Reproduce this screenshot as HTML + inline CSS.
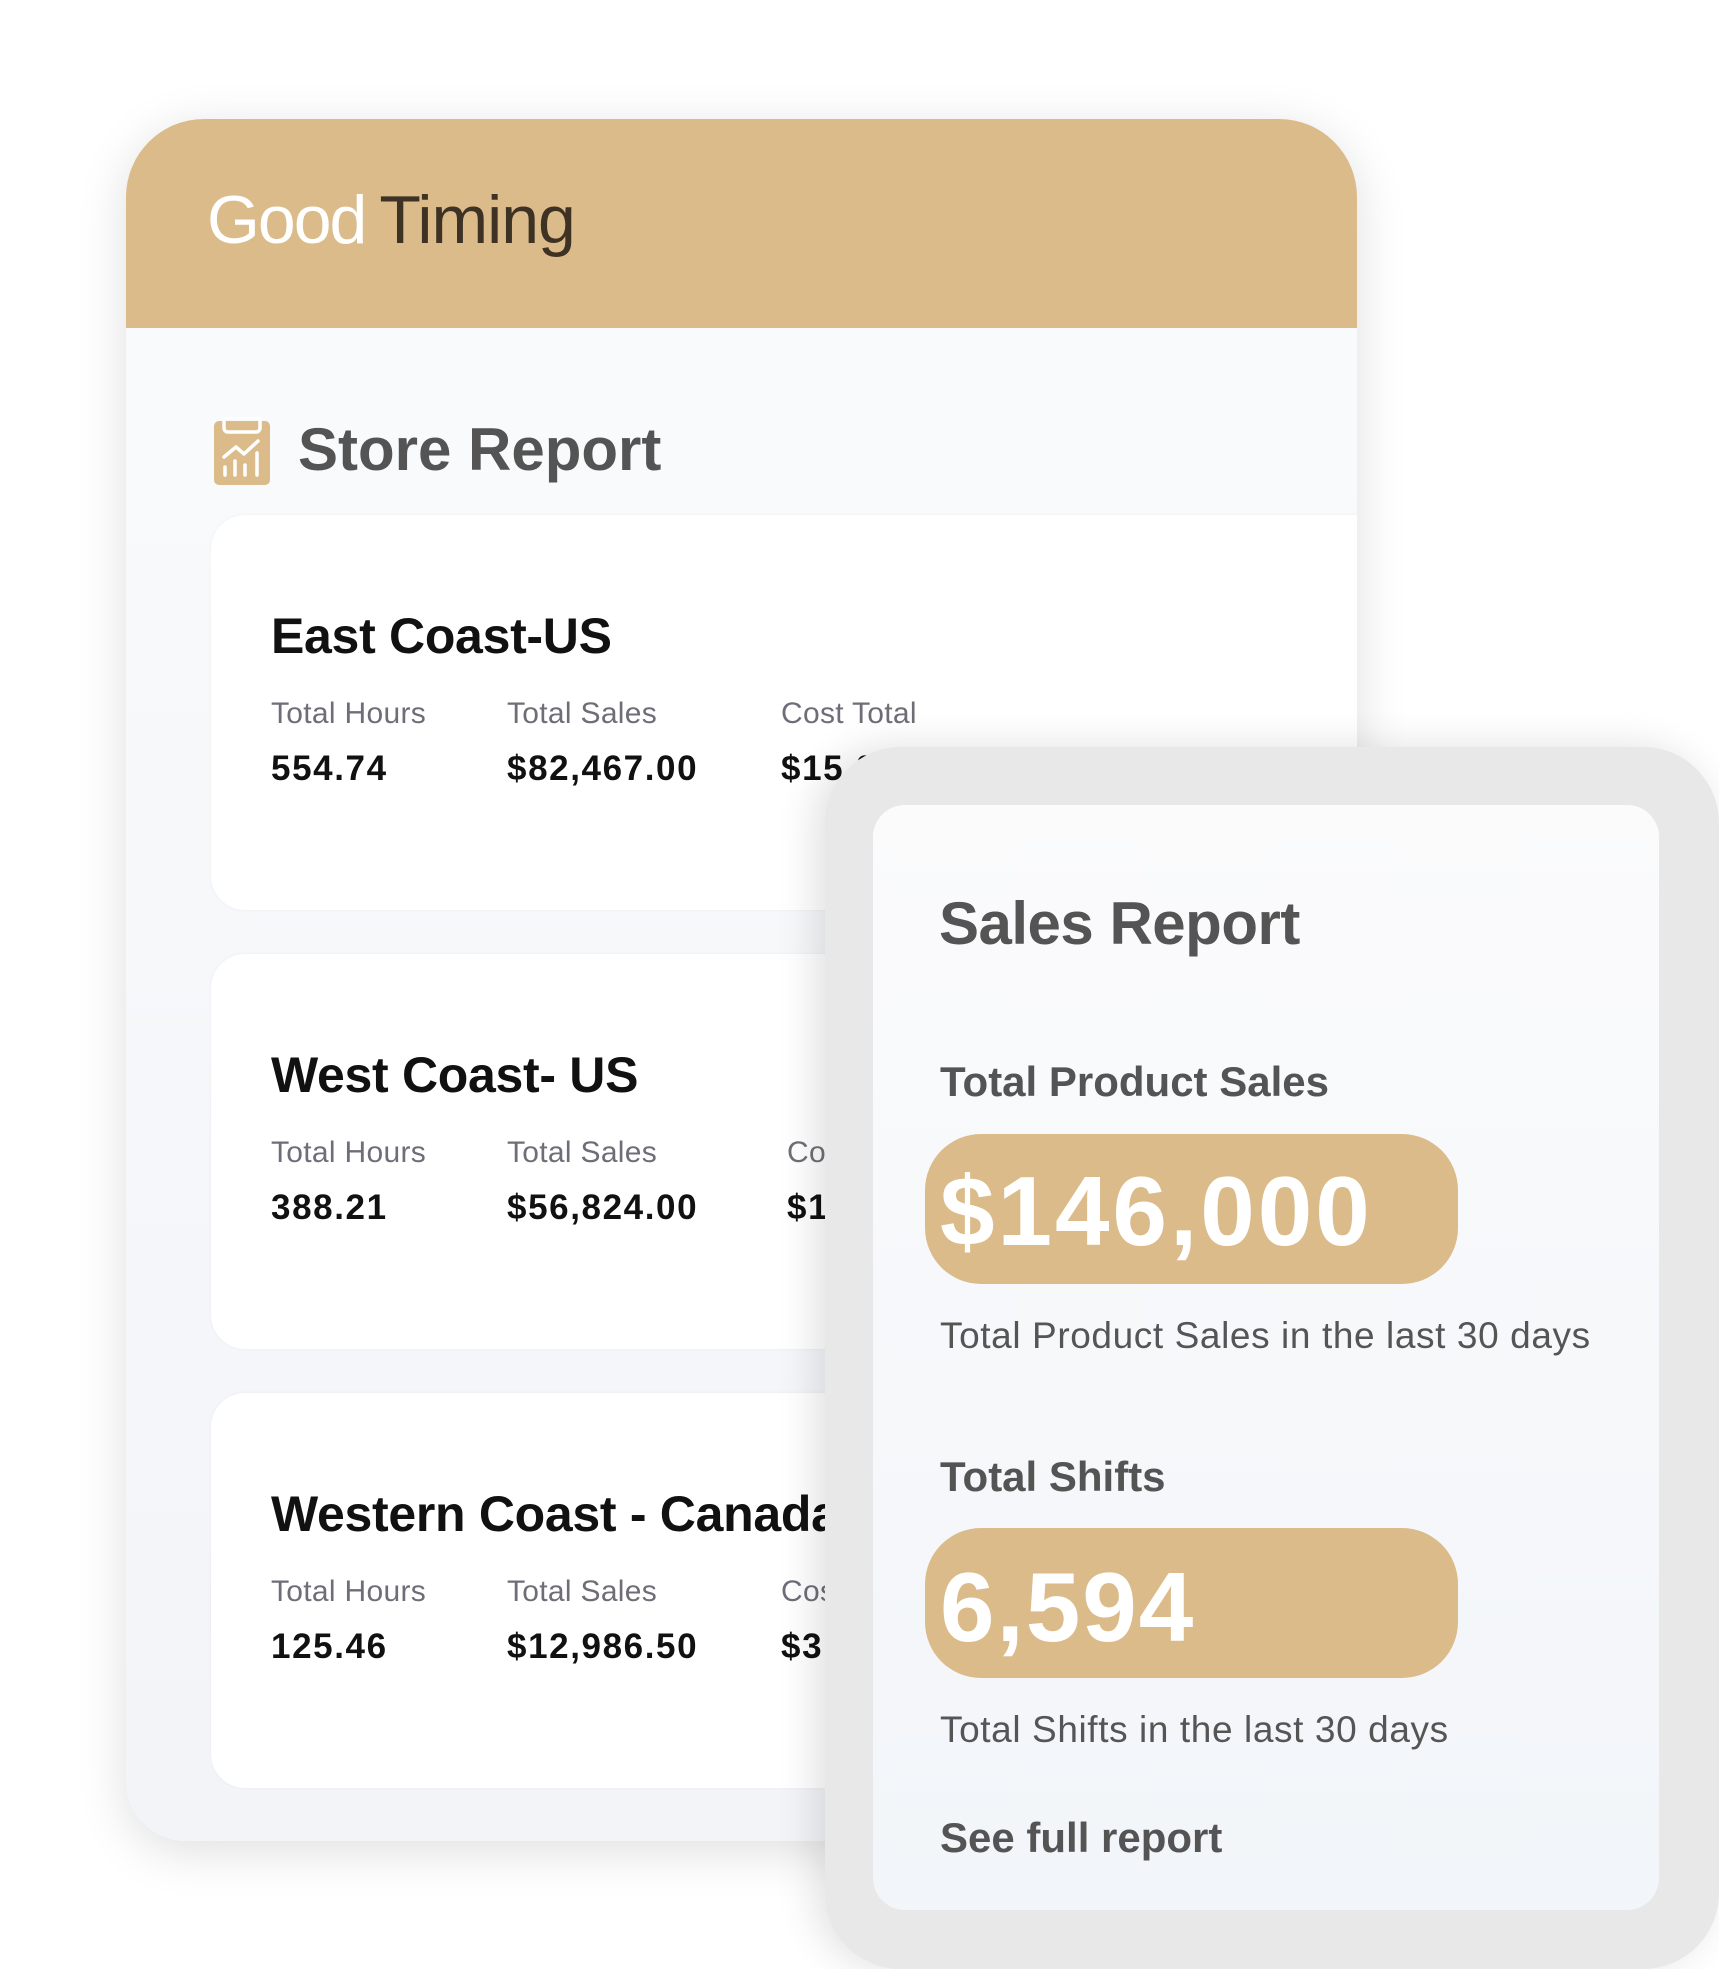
<!DOCTYPE html>
<html><head><meta charset="utf-8"><style>
*{margin:0;padding:0;box-sizing:border-box}
body{width:1719px;height:1969px;background:#fff;position:relative;overflow:hidden;font-family:"Liberation Sans",sans-serif}
.a{position:absolute;white-space:nowrap;line-height:1}
#main{position:absolute;left:126px;top:119px;width:1231px;height:1722px;border-radius:78px 78px 60px 60px;background:linear-gradient(#fafbfc,#f2f4f8);box-shadow:0 10px 50px rgba(0,0,0,.13);overflow:hidden}
#hdr{position:absolute;left:0;top:0;width:100%;height:209px;background:#dbbb89}
.card{position:absolute;left:85px;width:1300px;height:395px;background:#fff;border-radius:34px;box-shadow:0 0 3px rgba(0,0,0,.05)}
.ct{font-size:50px;font-weight:bold;color:#111;left:60px;top:96px;letter-spacing:-0.3px}
.lb{font-size:30px;color:#6e6e78;top:184px;letter-spacing:0.3px}
.vl{font-size:35px;font-weight:bold;color:#111;top:236px;letter-spacing:1.6px}
#outer{position:absolute;left:825px;top:747px;width:894px;height:1222px;border-radius:76px;background:#e8e8e8;box-shadow:-10px 0 40px rgba(0,0,0,.12)}
#inner{position:absolute;left:873px;top:805px;width:786px;height:1105px;border-radius:32px;background:linear-gradient(#fbfbfc,#f2f5f9)}
.pill{position:absolute;left:925px;width:533px;height:150px;border-radius:56px;background:#dbbb89}
.g{color:#545454;font-weight:bold}
</style></head><body>
<div id="main">
 <div id="hdr">
  <div class="a" style="left:81px;top:67px;font-size:68px;color:#fff;letter-spacing:-2px">Good<span style="color:#3d3224;margin-left:14px;letter-spacing:-1px">Timing</span></div>
 </div>
 <svg style="position:absolute;left:88px;top:298px" width="56" height="68" viewBox="0 0 56 68"><rect x="0" y="4" width="56" height="64" rx="5" fill="#dbbb89"/><rect x="10" y="0" width="36" height="15" rx="4" fill="none" stroke="#fff" stroke-width="3.5"/><polyline points="10,40 22,30 30,37 44,24" fill="none" stroke="#fff" stroke-width="3.5" stroke-linecap="round" stroke-linejoin="round"/><g stroke="#fff" stroke-width="3.5" stroke-linecap="round"><line x1="11" y1="50" x2="11" y2="58"/><line x1="21" y1="44" x2="21" y2="58"/><line x1="31" y1="48" x2="31" y2="58"/><line x1="43" y1="36" x2="43" y2="58"/></g></svg>
 <div class="a g" style="left:172px;top:301px;font-size:60px">Store Report</div>
 <div class="card" style="top:396px">
  <div class="a ct">East Coast-US</div>
  <div class="a lb" style="left:60px">Total Hours</div><div class="a lb" style="left:296px">Total Sales</div><div class="a lb" style="left:570px">Cost Total</div>
  <div class="a vl" style="left:60px">554.74</div><div class="a vl" style="left:296px">$82,467.00</div><div class="a vl" style="left:570px">$15,000.00</div>
 </div>
 <div class="card" style="top:835px">
  <div class="a ct">West Coast- US</div>
  <div class="a lb" style="left:60px">Total Hours</div><div class="a lb" style="left:296px">Total Sales</div><div class="a lb" style="left:576px">Cost Total</div>
  <div class="a vl" style="left:60px">388.21</div><div class="a vl" style="left:296px">$56,824.00</div><div class="a vl" style="left:576px">$10,000.00</div>
 </div>
 <div class="card" style="top:1274px">
  <div class="a ct">Western Coast - Canada</div>
  <div class="a lb" style="left:60px">Total Hours</div><div class="a lb" style="left:296px">Total Sales</div><div class="a lb" style="left:570px">Cost Total</div>
  <div class="a vl" style="left:60px">125.46</div><div class="a vl" style="left:296px">$12,986.50</div><div class="a vl" style="left:570px">$3,000.00</div>
 </div>
</div>
<div id="outer"></div>
<div id="inner"></div>
<div class="a g" style="left:939px;top:894px;font-size:60px;letter-spacing:-0.5px">Sales Report</div>
<div class="a g" style="left:940px;top:1061px;font-size:42px">Total Product Sales</div>
<div class="pill" style="top:1134px"></div>
<div class="a" style="left:940px;top:1162px;font-size:98px;font-weight:bold;color:#fff;letter-spacing:3px">$146,000</div>
<div class="a" style="left:940px;top:1317px;font-size:37px;color:#555;letter-spacing:0.6px">Total Product Sales in the last 30 days</div>
<div class="a g" style="left:940px;top:1456px;font-size:42px">Total Shifts</div>
<div class="pill" style="top:1528px"></div>
<div class="a" style="left:940px;top:1558px;font-size:98px;font-weight:bold;color:#fff;letter-spacing:2px">6,594</div>
<div class="a" style="left:940px;top:1711px;font-size:37px;color:#555;letter-spacing:0.6px">Total Shifts in the last 30 days</div>
<div class="a g" style="left:940px;top:1817px;font-size:42px">See full report</div>
</body></html>
